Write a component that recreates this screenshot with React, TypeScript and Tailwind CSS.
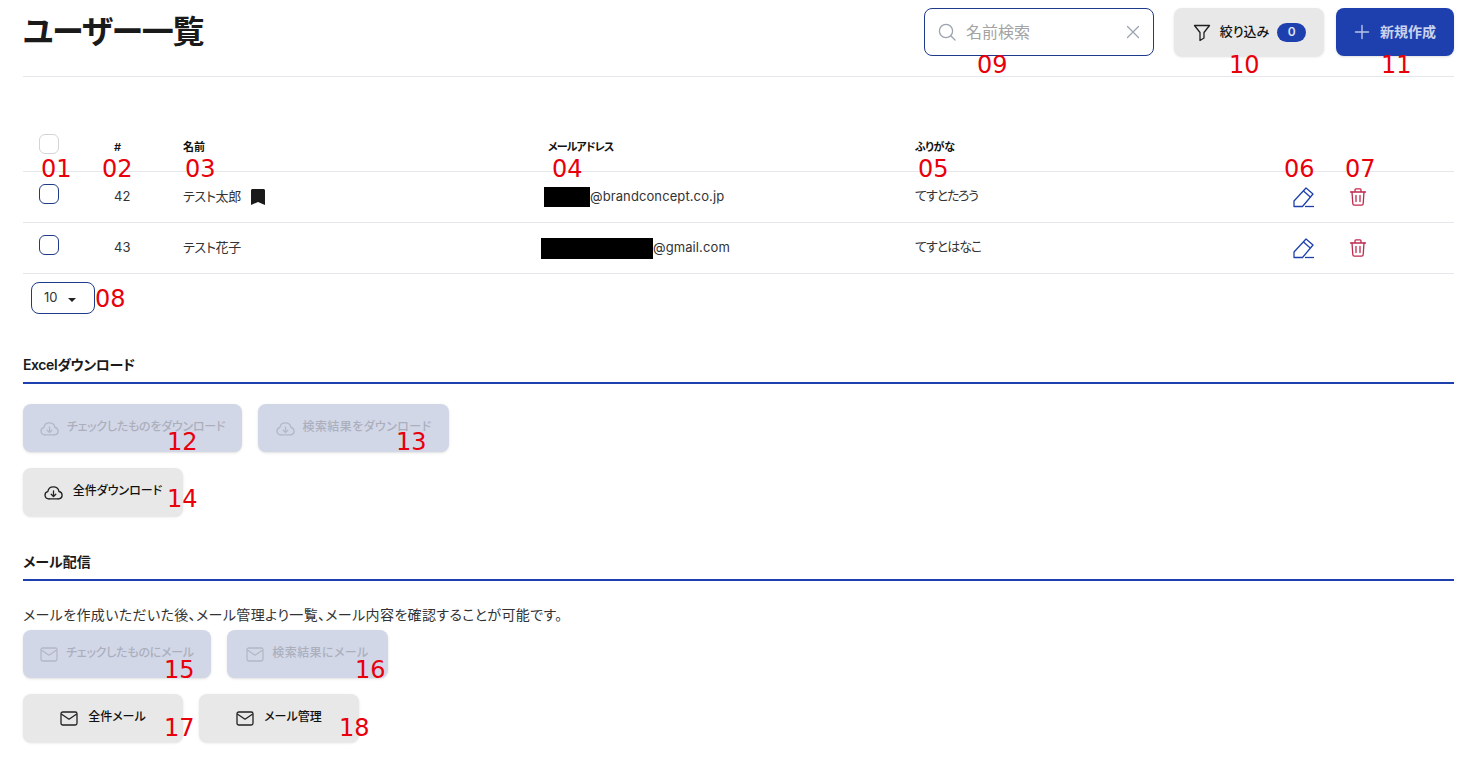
import React from "react";

const font = "font-['Inter','Noto_Sans_CJK_JP',sans-serif] [font-feature-settings:'palt']";

function SearchIcon() {
  return (
    <svg width="20" height="20" viewBox="0 0 20 20" fill="none" stroke="#9ca3af" strokeWidth="1.3" strokeLinecap="round">
      <circle cx="9" cy="9" r="6.6" />
      <path d="M14 14l4 4" />
    </svg>
  );
}
function CloseIcon() {
  return (
    <svg width="16" height="16" viewBox="0 0 16 16" fill="none" stroke="#9ca3af" strokeWidth="1.3" strokeLinecap="round">
      <path d="M2.5 2.5l11 11M13.5 2.5l-11 11" />
    </svg>
  );
}
function FunnelIcon() {
  return (
    <svg width="20" height="20" viewBox="0 0 20 20" fill="none" stroke="#1f1f1f" strokeWidth="1.3" strokeLinejoin="round">
      <path d="M2.5 3.5h15l-5.5 7v5.5l-4 2.5v-8z" />
    </svg>
  );
}
function PlusIcon() {
  return (
    <svg width="16" height="16" viewBox="0 0 16 16" fill="none" stroke="#b9c4e4" strokeWidth="1.4" strokeLinecap="round">
      <path d="M8 1.5v13M1.5 8h13" />
    </svg>
  );
}
function EditIcon() {
  return (
    <svg width="22" height="22" viewBox="0 0 22 22" fill="none" stroke="#1e40af" strokeWidth="1.3" strokeLinejoin="round">
      <path d="M1 20.5V15L13 2l7 6-10.5 12.5z" />
      <path d="M10.5 5l6.8 6" />
      <path d="M12 20.5h9" />
    </svg>
  );
}
function TrashIcon() {
  return (
    <svg width="18" height="20" viewBox="0 0 18 20" fill="none" stroke="#be2a4d" strokeWidth="1.3" strokeLinecap="round" strokeLinejoin="round">
      <path d="M1.5 5h15M6 5V2.8c0-.6.4-1 1-1h4c.6 0 1 .4 1 1V5" />
      <path d="M3 5l.8 11.5c0 1 .8 1.7 1.7 1.7h7c.9 0 1.7-.7 1.7-1.7L15 5" />
      <path d="M7 8.5v6M11 8.5v6" />
    </svg>
  );
}
function BookmarkIcon() {
  return (
    <svg width="14" height="16" viewBox="0 0 14 16" fill="#1a1a1a">
      <path d="M0 1.5C0 .7.7 0 1.5 0h11c.8 0 1.5.7 1.5 1.5V16l-7-3-7 3z" />
    </svg>
  );
}
function CloudIcon({ color }: { color: string }) {
  return (
    <svg width="19" height="17" viewBox="0 0 19 17" fill="none" stroke={color} strokeWidth="1.3" strokeLinecap="round" strokeLinejoin="round">
      <path d="M5 14.8H4.4A3.6 3.6 0 0 1 3.8 7.7 5.7 5.7 0 0 1 15 7.5a3.7 3.7 0 0 1 0 7.3h-1" />
      <path d="M5 14.8h9M9.5 6.8v5.6M7.2 10.3l2.3 2.3 2.3-2.3" />
    </svg>
  );
}
function MailIcon({ color }: { color: string }) {
  return (
    <svg width="18" height="15" viewBox="0 0 18 15" fill="none" stroke={color} strokeWidth="1.3" strokeLinejoin="round">
      <rect x="1" y="1" width="16" height="13" rx="1.8" />
      <path d="M1.3 3l7.7 5.2L16.7 3" />
    </svg>
  );
}

function Button({ icon, label, disabled, width, textClass = "" }: { icon: React.ReactNode; label: string; disabled?: boolean; width: string; textClass?: string }) {
  return (
    <div
      className={`flex h-12 items-center justify-center rounded-lg text-xs font-medium shadow-sm ${width} ${
        disabled ? "gap-2 bg-[#d2d7e8] text-[#abafbc]" : "gap-2.5 bg-[#e8e8e8] text-[#111]"
      }`}
    >
      {icon}
      <span className={`pb-0.5 ${textClass}`}>{label}</span>
    </div>
  );
}

const columns = "grid grid-cols-[91px_69px_365px_367px_378px_55px_1fr] items-center";

function Row({ id, name, mail, furi, bookmark, redact }: { id: string; name: string; mail: string; furi: string; bookmark?: boolean; redact: string }) {
  return (
    <div className={`${columns} h-[51px] border-b border-[#e5e7eb] text-[13px] text-[#333]`}>
      <div className="pl-4 pb-1.5">
        <div className="h-5 w-5 rounded-md border border-[#1e3a8a] bg-white" />
      </div>
      <div>{id}</div>
      <div className="flex items-center gap-2.5">
        <span className="pb-px tracking-[-0.3px]">{name}</span>
        {bookmark && <BookmarkIcon />}
      </div>
      <div className="flex items-center">
        <span className={`bg-black ${redact}`} />
        <span className="tracking-[0.1px]">{mail}</span>
      </div>
      <div className="pb-0.5 tracking-[-1px]">{furi}</div>
      <div><EditIcon /></div>
      <div className="pl-px"><TrashIcon /></div>
    </div>
  );
}

function Tag({ n, className }: { n: string; className: string }) {
  return <span className={`absolute font-['DejaVu_Sans',sans-serif] text-2xl leading-none text-[#e8000b] ${className}`}>{n}</span>;
}

export default function App() {
  return (
    <div className={`relative h-[765px] w-[1478px] overflow-hidden bg-white pl-[23px] pr-6 text-[#1f1f1f] ${font}`}>
      <header className="flex h-[77px] items-start justify-between border-b border-[#e5e7eb] pt-2">
        <h1 className="text-[32px] font-bold leading-[48px] tracking-[-1.3px] text-[#1a1a1a]">ユーザー一覧</h1>
        <div className="flex gap-3">
          <div className="mr-2 flex h-12 w-[230px] items-center rounded-lg border border-[#1e3a8a] bg-white pl-[12px] pr-3 text-base text-[#a3a3a3]">
            <SearchIcon />
            <span className="ml-[9px] flex-1">名前検索</span>
            <CloseIcon />
          </div>
          <div className="flex h-12 w-[150px] items-center justify-center gap-2 rounded-lg bg-[#e8e8e8] text-[13px] font-medium text-[#111] shadow-sm">
            <FunnelIcon />
            <span>絞り込み</span>
            <span className="flex h-[19px] w-[29px] items-center justify-center rounded-full bg-[#1e40af] text-xs font-semibold text-[#dbe3f7]">0</span>
          </div>
          <div className="flex h-12 w-[118px] items-center justify-center gap-[10px] rounded-lg bg-[#1e40af] text-sm font-semibold text-[#c9d3ee] shadow-sm">
            <PlusIcon />
            <span>新規作成</span>
          </div>
        </div>
      </header>

      <section className="mt-[44px]">
        <div className={`${columns} h-[51px] border-b border-[#e5e7eb] text-[11px] font-semibold text-[#111]`}>
          <div className="pl-4 pb-1">
            <div className="h-5 w-5 rounded-md border border-[#d4d4d8] bg-white" />
          </div>
          <div className="pt-0.5">#</div>
          <div className="pt-0.5">名前</div>
          <div className="pt-0.5 tracking-[-0.9px]">メールアドレス</div>
          <div className="pt-0.5 tracking-[-0.4px]">ふりがな</div>
          <div />
          <div />
        </div>
        <Row id="42" name="テスト太郎" bookmark mail="@brandconcept.co.jp" furi="てすとたろう" redact="-ml-1 h-5 w-[46px]" />
        <Row id="43" name="テスト花子" mail="@gmail.com" furi="てすとはなこ" redact="-ml-[7px] h-[21px] w-28" />
        <div className="mt-2 ml-2 flex h-8 w-16 items-center gap-2.5 rounded-lg border border-[#1e3a8a] pl-3 text-[13px] text-[#333]">
          <span>10</span>
          <span className="mt-1 h-0 w-0 border-x-[4px] border-t-[4px] border-x-transparent border-t-[#222]" />
        </div>
      </section>

      <section className="mt-[41px]">
        <h2 className="border-b-2 border-[#1e40af] pb-[7px] text-sm font-semibold leading-[20px] tracking-[-0.4px] text-[#1a1a1a]">Excelダウンロード</h2>
        <div className="mt-5 flex gap-4">
          <Button disabled width="w-[219px]" textClass="tracking-[-0.25px]" label="チェックしたものをダウンロード" icon={<CloudIcon color="#b4b8c4" />} />
          <Button disabled width="w-[191px]" textClass="tracking-[0.4px]" label="検索結果をダウンロード" icon={<CloudIcon color="#b4b8c4" />} />
        </div>
        <div className="mt-4 flex gap-4">
          <Button width="w-40" label="全件ダウンロード" icon={<CloudIcon color="#222" />} />
        </div>
      </section>

      <section className="mt-[36px]">
        <h2 className="border-b-2 border-[#1e40af] pb-[7px] text-sm font-semibold leading-[20px] text-[#1a1a1a]">メール配信</h2>
        <p className="mt-[24px] text-sm leading-[20px] tracking-[0.36px] text-[#333]">メールを作成いただいた後、メール管理より一覧、メール内容を確認することが可能です。</p>
        <div className="mt-[5px] flex gap-4">
          <Button disabled width="w-[188px]" textClass="tracking-[-0.25px]" label="チェックしたものにメール" icon={<MailIcon color="#b4b8c4" />} />
          <Button disabled width="w-[161px]" textClass="tracking-[0.4px]" label="検索結果にメール" icon={<MailIcon color="#b4b8c4" />} />
        </div>
        <div className="mt-4 flex gap-4">
          <Button width="w-40" label="全件メール" icon={<MailIcon color="#222" />} />
          <Button width="w-40" label="メール管理" icon={<MailIcon color="#222" />} />
        </div>
      </section>

      <Tag n="01" className="left-[41px] top-[157px]" />
      <Tag n="02" className="left-[102px] top-[157px]" />
      <Tag n="03" className="left-[185px] top-[157px]" />
      <Tag n="04" className="left-[552px] top-[157px]" />
      <Tag n="05" className="left-[918px] top-[157px]" />
      <Tag n="06" className="left-[1284px] top-[157px]" />
      <Tag n="07" className="left-[1345px] top-[157px]" />
      <Tag n="08" className="left-[95px] top-[287px]" />
      <Tag n="09" className="left-[977px] top-[53px]" />
      <Tag n="10" className="left-[1229px] top-[53px]" />
      <Tag n="11" className="left-[1381px] top-[53px]" />
      <Tag n="12" className="left-[167px] top-[430px]" />
      <Tag n="13" className="left-[396px] top-[430px]" />
      <Tag n="14" className="left-[167px] top-[487px]" />
      <Tag n="15" className="left-[164px] top-[658px]" />
      <Tag n="16" className="left-[355px] top-[658px]" />
      <Tag n="17" className="left-[164px] top-[716px]" />
      <Tag n="18" className="left-[339px] top-[716px]" />
    </div>
  );
}
